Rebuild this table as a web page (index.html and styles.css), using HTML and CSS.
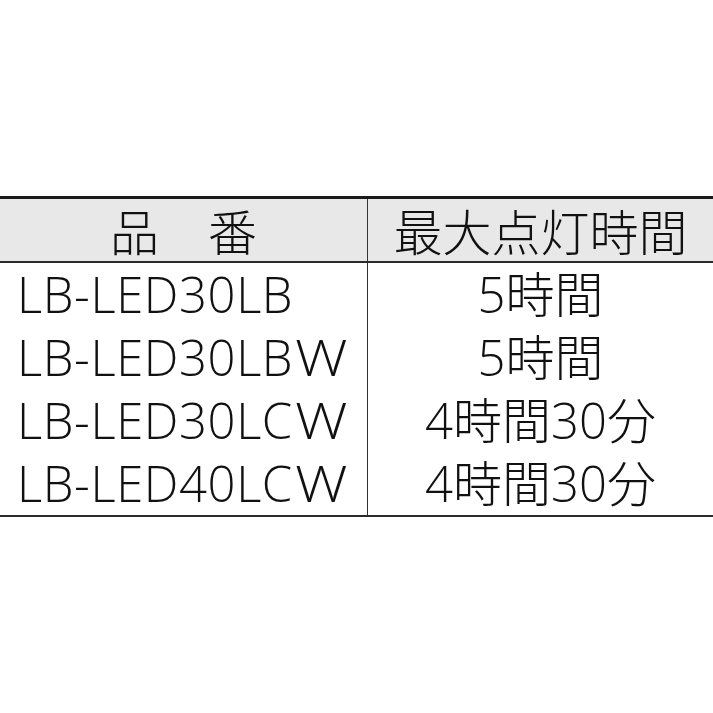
FILE: index.html
```html
<!DOCTYPE html>
<html lang="ja">
<head>
<meta charset="utf-8">
<link rel="stylesheet" href="styles.css">
</head>
<body>
<div class="page">
  <table class="spec">
    <thead>
      <tr>
        <th class="col-a">品　番</th>
        <th class="col-b">最大点灯時間</th>
      </tr>
    </thead>
    <tbody>
      <tr><td class="col-a">LB-LED30LB</td><td class="col-b">5時間</td></tr>
      <tr><td class="col-a">LB-LED30LB<span class="wide">W</span></td><td class="col-b">5時間</td></tr>
      <tr><td class="col-a">LB-LED30LC<span class="wide">W</span></td><td class="col-b">4時間30分</td></tr>
      <tr><td class="col-a">LB-LED40LC<span class="wide">W</span></td><td class="col-b">4時間30分</td></tr>
    </tbody>
  </table>
</div>
</body>
</html>
```
FILE: styles.css
```css
html, body {
  margin: 0;
  padding: 0;
  background: #ffffff;
}
.page {
  width: 713px;
  height: 713px;
  padding-top: 196px;
  box-sizing: border-box;
  overflow: hidden;
}
.spec {
  width: 713px;
  border-collapse: collapse;
  font-family: "Open Sans", "Noto Sans CJK JP", sans-serif;
  font-weight: 300;
  font-size: 49px;
  color: #111111;
  table-layout: fixed;
}
.spec th, .spec td {
  padding: 0;
  line-height: 1.2;
  white-space: nowrap;
}
.spec thead th {
  height: 62px;
  background: #e8e8e9;
  font-weight: 300;
  font-family: "Noto Sans CJK JP", sans-serif;
  text-align: center;
  border-top: 3px solid #1a1a1a;
  border-bottom: 2px solid #2a2a2a;
}
.spec tbody td {
  height: 63px;
}
.spec tbody tr:last-child td {
  border-bottom: 2px solid #2a2a2a;
}
.col-a {
  width: 367px;
  border-right: 1px solid #333333;
}
.spec td.col-a {
  text-align: left;
  padding-left: 17px;
  letter-spacing: 0.6px;
}
.wide {
  display: inline-block;
  transform: scaleX(1.2);
  transform-origin: left center;
  margin-left: 2px;
}
.col-b {
  text-align: center;
}
```
